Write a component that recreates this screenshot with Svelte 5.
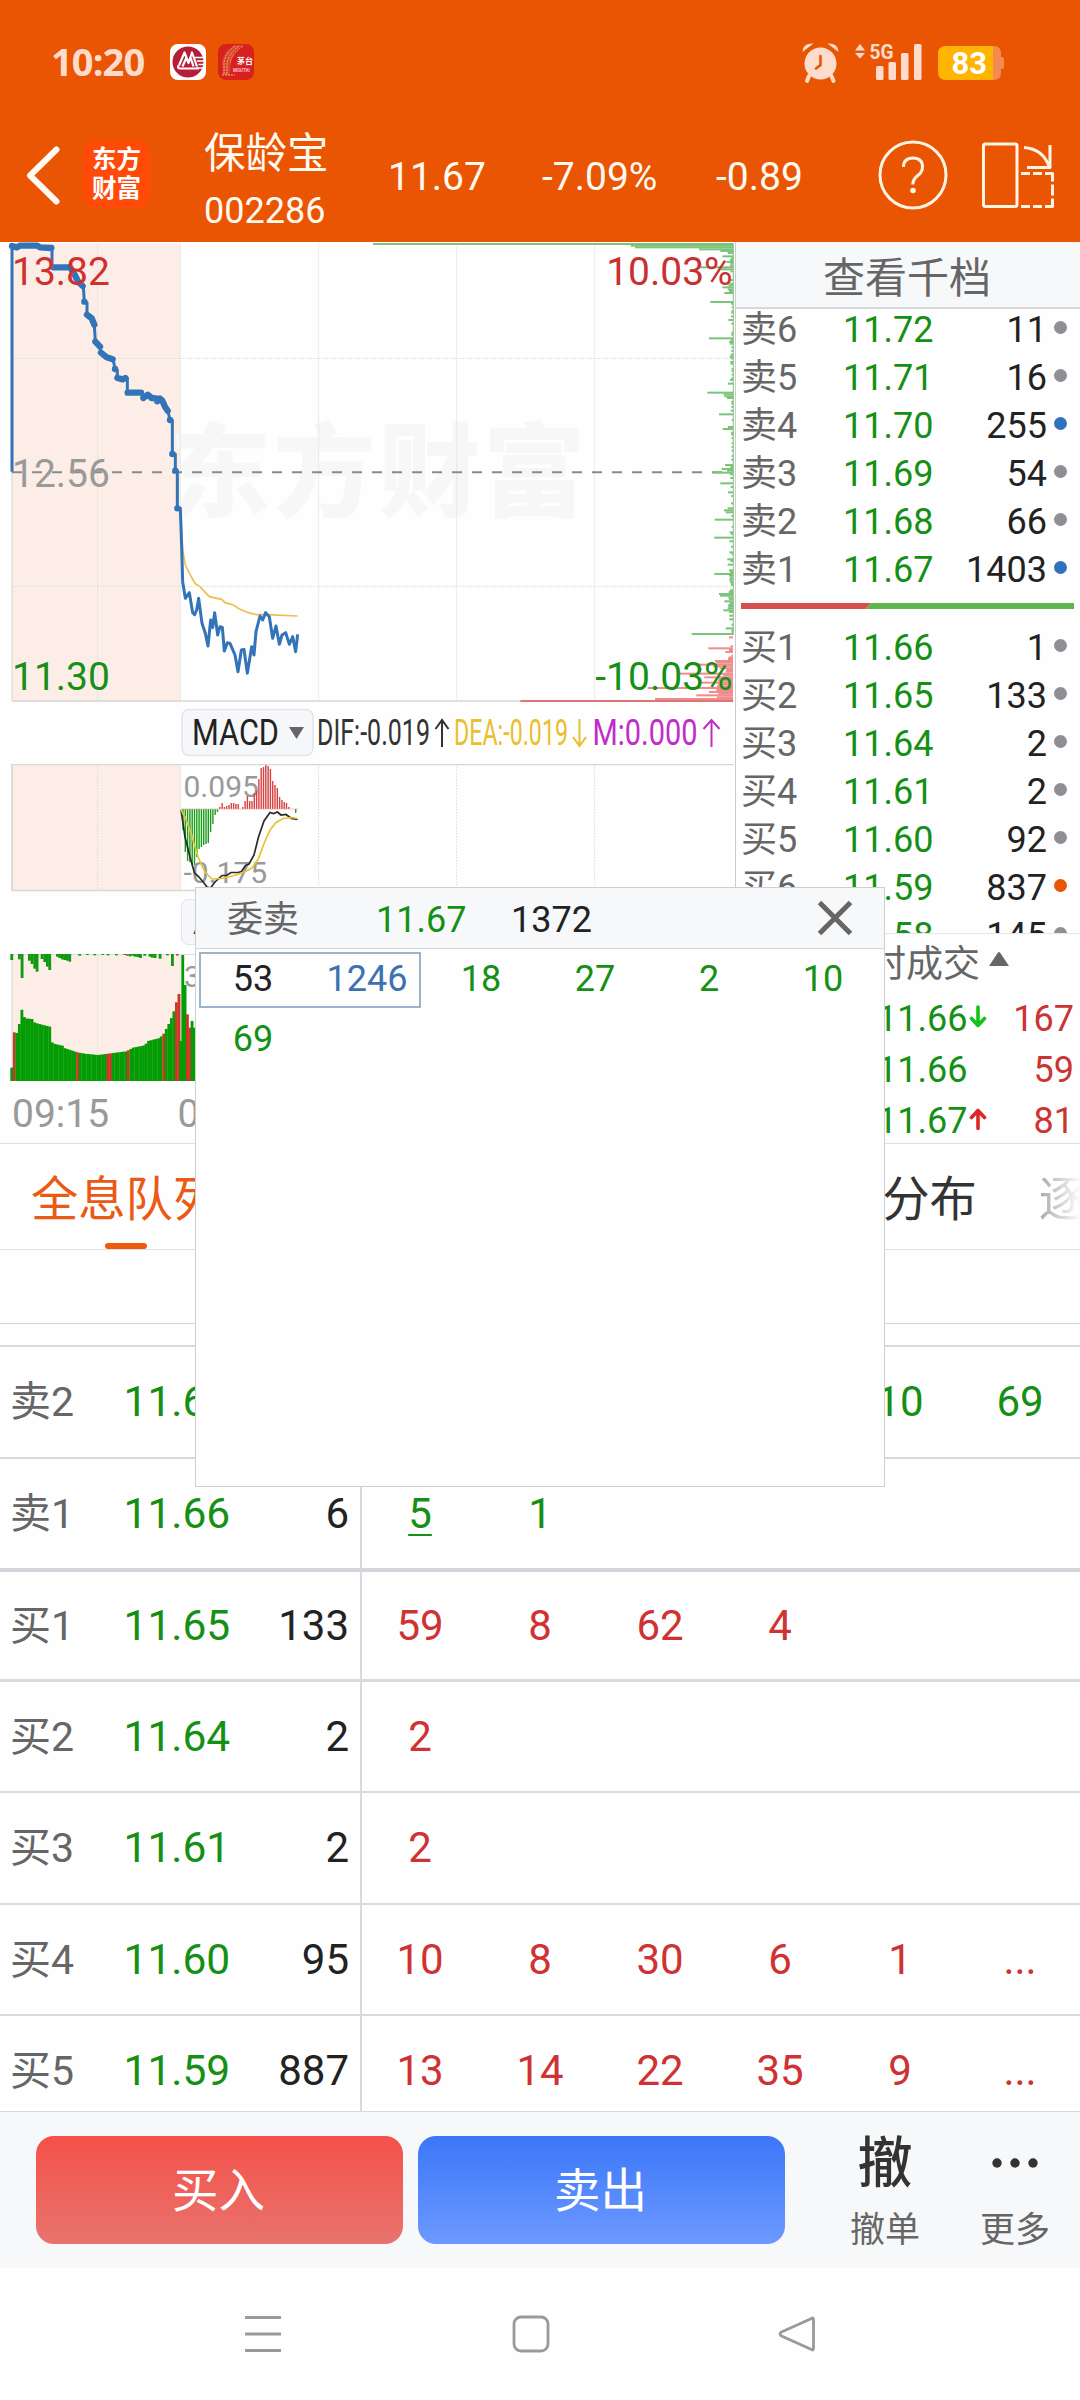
<script>
  const asks = [
    ['卖6', '11.72', '11', 'grey'],
    ['卖5', '11.71', '16', 'grey'],
    ['卖4', '11.70', '255', 'blue'],
    ['卖3', '11.69', '54', 'grey'],
    ['卖2', '11.68', '66', 'grey'],
    ['卖1', '11.67', '1403', 'blue']
  ];
  const bids = [
    ['买1', '11.66', '1', 'grey'],
    ['买2', '11.65', '133', 'grey'],
    ['买3', '11.64', '2', 'grey'],
    ['买4', '11.61', '2', 'grey'],
    ['买5', '11.60', '92', 'grey'],
    ['买6', '11.59', '837', 'orange'],
    ['买7', '11.58', '145', 'grey']
  ];
  const trades = [
    ['11.66', 'down', '167'],
    ['11.66', '', '59'],
    ['11.67', 'up', '81']
  ];
  const tabs = ['全息队列', '千档盘口', '逐笔成交', '成交分布', '逐笔'];
  const queue = [
    { label: '卖2', price: '11.67', vol: '1372', side: 'ask', cells: ['53', '1246', '18', '27', '10', '69'], h: 'h112' },
    { label: '卖1', price: '11.66', vol: '6', side: 'ask', cells: ['5', '1'], h: 'split', mark: true },
    { label: '买1', price: '11.65', vol: '133', side: 'bid', cells: ['59', '8', '62', '4'], h: 'h110' },
    { label: '买2', price: '11.64', vol: '2', side: 'bid', cells: ['2'], h: 'h111' },
    { label: '买3', price: '11.61', vol: '2', side: 'bid', cells: ['2'], h: 'h112' },
    { label: '买4', price: '11.60', vol: '95', side: 'bid', cells: ['10', '8', '30', '6', '1', '...'], h: 'h111' },
    { label: '买5', price: '11.59', vol: '887', side: 'bid', cells: ['13', '14', '22', '35', '9', '...'], h: 'h111' }
  ];
  const popupCells = ['53', '1246', '18', '27', '2', '10', '69'];

  const grid = [293, 541, 956, 1370, 1784];
  const flatRuns =
    'M36 18L50 22L60 17H112L120 22L154 24M160 82H210L222 100L235 126L248 138M253 185h.1M261 224L275 235L283 254M286 305L300 320M303 338L320 352L338 358M345 387h.1M352 414L368 418L376 414M383 458H423M430 474L443 464L455 474L472 476V484L480 476L487 482L495 500L503 512M510 540h.1M517 642h.1M526 692h.1M532 805h.1';
  const pricePath =
    'M36 695V18L50 22L60 17H112L120 22H156V82H210L222 105L235 128L250 140L253 185L261 188V224L275 235L283 256L286 305L300 320L303 338L320 352L340 360L345 387L352 390V414H382V458H425L430 474L443 464L455 474L485 476L495 500L504 514L510 540H517V642H526V692H532V805H541L545 920L548 1025L556 1075L568 1058L578 1118L584 1124L590 1110L596 1075L606 1150L616 1180L624 1218L632 1140L638 1163L644 1118L653 1185L660 1160L667 1162L673 1233L682 1208L690 1210L705 1245L714 1295L724 1230L732 1228L742 1300L755 1220L762 1245L768 1175L780 1128L788 1140L797 1118L808 1130L818 1195L828 1158L838 1213L846 1185L857 1178L868 1213L878 1190L887 1235L893 1183';
  const avgPath =
    'M541 808L548 930L556 975L570 1003L585 1030L600 1040L628 1070L665 1078L675 1088L700 1095L720 1108L745 1118L770 1124H800L893 1128';

  // price distribution: [y, length]
  const sold = [
    [12, 1080], [17, 307], [22, 294], [28, 102], [33, 38], [39, 16], [49, 32], [55, 6], [60, 9], [66, 20], [71, 8], [77, 9], [82, 100], [88, 36], [94, 8], [120, 8],
    [131, 10], [136, 14], [142, 32], [148, 16], [153, 12], [159, 26], [186, 68], [191, 6], [202, 4], [213, 4], [218, 5], [229, 6], [240, 14], [251, 5], [278, 5], [284, 5],
    [295, 72], [300, 7], [306, 12], [311, 9], [322, 5], [333, 5], [344, 7], [350, 10], [355, 7], [366, 8], [371, 7], [387, 4], [393, 4], [404, 4], [415, 5], [420, 9], [431, 15],
    [458, 77], [463, 28], [469, 26], [474, 18], [485, 5], [491, 5], [501, 5], [512, 7], [523, 42], [540, 4], [561, 15], [567, 31], [578, 6], [583, 6], [594, 4],
    [610, 4], [621, 4], [632, 4], [648, 4], [659, 5], [675, 24], [681, 8], [687, 34], [692, 18], [698, 60], [703, 10], [714, 8], [730, 38], [741, 7], [757, 15], [768, 5], [790, 6],
    [805, 16], [811, 27], [817, 22], [828, 5], [839, 55], [861, 4], [877, 10], [882, 6], [893, 56], [904, 11], [920, 6], [937, 11], [942, 4], [958, 17], [963, 8], [974, 16],
    [991, 12], [996, 9], [1002, 56], [1007, 12], [1013, 9], [1018, 11], [1024, 10], [1029, 7], [1035, 6], [1051, 9], [1056, 13], [1062, 42], [1067, 39], [1073, 14], [1078, 12],
    [1084, 26], [1089, 10], [1095, 14], [1100, 14], [1105, 16], [1111, 29], [1116, 12], [1127, 11], [1138, 11], [1154, 5], [1165, 22], [1171, 5], [1176, 4], [1182, 124]
  ];
  const bought = [
    [1192, 12], [1219, 8], [1225, 74], [1230, 12], [1236, 23], [1247, 5], [1252, 13], [1257, 15], [1263, 54], [1268, 50], [1274, 105], [1279, 60], [1285, 40], [1290, 20],
    [1295, 22], [1301, 160], [1306, 30], [1312, 86], [1317, 42], [1322, 45], [1328, 94], [1333, 46], [1339, 48], [1344, 256], [1350, 50], [1356, 72], [1361, 44], [1366, 110],
    [1372, 48], [1377, 234], [1383, 638]
  ];

  const macd = [
    -21, -43, -52, -53, -55, -56, -48, -40, -38, -36, -35, -34, -23, -15, -6, -3, 2, 6, 2, 3, 4, 6, 6, 5, 5, 0, 2, 8, 13, 8, 8, 16, 18, 30, 41, 42, 44, 43, 40, 28, 24,
    21, 12, 9, 7, 6, 2, 0, 0, -4
  ];

  // volume bars: [x, top, red?]
  const envelope = [
    [54, 431], [62, 386], [70, 415], [92, 417], [100, 428], [122, 434], [146, 440], [153, 490], [183, 497], [191, 505], [213, 512], [228, 517], [250, 521], [290, 525],
    [335, 519], [375, 514], [395, 503], [430, 496], [440, 483], [475, 474], [488, 460], [498, 440], [506, 425], [514, 403], [522, 382], [530, 342]
  ];
  const redAt = [228, 319, 327, 380, 486, 524, 531];
  function topAt(x) {
    for (let i = 1; i < envelope.length; i++) {
      const [x1, y1] = envelope[i];
      const [x0, y0] = envelope[i - 1];
      if (x <= x1) return y0 + ((y1 - y0) * (x - x0)) / (x1 - x0);
    }
    return 342;
  }
  const volume = [[31, 563, false], [38.6, 457, true], [46.2, 459, false]];
  for (let x = 53.8; x < 534; x += 7.6) volume.push([x, topAt(x), redAt.some((r) => Math.abs(r - x) < 3.8)]);
  volume.push([538, 483, false], [544, 225, false], [551, 315, false], [558, 403, true], [565, 443, true], [572, 423, false], [579, 443, false], [586, 440, false]);
  const unmatched = [
    [31, 18], [54, 16], [62, 72], [84, 20], [92, 30], [100, 44], [107, 53], [122, 15], [130, 24], [138, 38], [145, 48], [168, 8], [175, 12], [183, 16], [190, 18], [198, 20],
    [205, 23], [235, 5], [258, 3], [280, 4], [304, 3], [320, 4], [345, 4], [370, 3], [386, 7], [394, 5], [401, 8], [409, 9], [417, 12], [430, 5], [446, 8], [453, 11], [461, 12],
    [476, 14], [498, 4], [513, 36]
  ];
</script>

<div class="screen">
  <header>
    <div class="status">
      <span class="clock">10:20</span>
      <svg class="app" width="36" height="36" viewBox="0 0 36 36">
        <rect width="36" height="36" rx="8" fill="#fff" />
        <circle cx="18" cy="18" r="15.500" fill="#b81c36" />
        <path d="M25 13.500h10M27 17h8M28.500 20.500h6M26 24h8" stroke="#fff" stroke-width="1.300" />
        <path d="M9 21.500L14.500 8.500L18.500 19L22 8.500L27 22.500M12.500 22.500L16.500 13.500M23.500 22.500L20.500 13.500M8.500 21.500Q7 24.500 10.500 24.500H29" fill="none" stroke="#fff" stroke-width="2.200" stroke-linejoin="round" />
      </svg>
      <svg class="app second" width="36" height="36" viewBox="0 0 36 36">
        <rect width="36" height="36" rx="8" fill="#d8201f" />
        <path d="M17 1h8q-10 7-12 16l-1 14H5L4 17Q7 6 17 1z" fill="#dc5232" opacity=".7" />
        <path d="M17 2q-11 8-11 18v10M21 2Q10 10 9 20v11M25 2Q14 9 12 19M4 31h13" fill="none" stroke="#f5b578" stroke-width="1" stroke-dasharray="2 1" />
        <text x="19" y="20" class="tiny">茅台</text>
        <text x="15" y="27.500" class="micro">MOUTAI</text>
      </svg>
      <svg class="signals" width="204" height="44" viewBox="801 40 204 44">
        <g fill="#fddccb">
          <circle cx="820.500" cy="63.500" r="16" />
          <path d="M802.500 52q0-9 11-8.500zM838.500 52q0-9-11-8.500z" />
          <path d="M809 76l-2 5M831.500 76l2 5" stroke="#fddccb" stroke-width="4" stroke-linecap="round" />
          <path d="M855 50.500l5-6.500 5 6.500zM855 53l5 5.500 5-5.500z" />
          <rect x="876" y="66" width="7.500" height="14" rx="1.500" />
          <rect x="888.500" y="62" width="7.500" height="18" rx="1.500" />
          <rect x="901" y="53" width="7.500" height="27" rx="1.500" />
          <rect x="914" y="44" width="7.500" height="36" rx="1.500" />
          <text x="869.500" y="59" class="net" textLength="24" lengthAdjust="spacingAndGlyphs">5G</text>
        </g>
        <path d="M820.500 56v9l-4.500 3.500" fill="none" stroke="#ea5504" stroke-width="2.600" stroke-linecap="round" />
        <path d="M992 46h2q7 0 7 8v3h1q2 0 2 2v8q0 2-2 2h-1v3q0 8-7 8h-2z" fill="#f28a52" />
        <path d="M993 46h-47q-8 0-8 8v18q0 8 8 8h47z" fill="#ffb400" />
        <text x="951.500" y="74.200" class="battery">83</text>
      </svg>
    </div>
    <div class="titlebar">
      <svg class="back" width="36" height="60" viewBox="0 0 36 60"><path d="M32.500 4.500L6 30.500L32.500 56.500" /></svg>
      <div class="logo"><span>东方</span><span>财富</span></div>
      <div class="stock"><span class="name">保龄宝</span><span class="code">002286</span></div>
      <span class="quote q1">11.67</span>
      <span class="quote q2">-7.09%</span>
      <span class="quote q3">-0.89</span>
      <svg class="help" width="70" height="70" viewBox="0 0 70 70">
        <circle cx="35" cy="35" r="33" />
        <path d="M25.500 27q0-9 9.500-9t9.500 9q0 5-4.700 8.500-5 4-5 9" />
        <circle class="dot" cx="35" cy="50.500" r="2.800" />
      </svg>
      <svg class="rotate" width="74" height="68" viewBox="981 140 74 68">
        <rect x="983.500" y="143" width="33.500" height="62.500" rx="2" />
        <path d="M1024 146.500q19 1.500 25 19M1050 144v22.500h-23" />
        <path d="M1021 172.500h9m3 0h9m3 0h7.500v8m0 3v11m0 3v8h-7.500m-3 0h-9m-3 0h-9" />
      </svg>
    </div>
  </header>

  <main>
    <section class="charts">
      <svg class="price" width="734" height="462" viewBox="0 6 2202 1386">
        <rect x="36" y="10" width="505" height="1373" fill="#fceee7" />
        <text class="watermark" x="506" y="808" textLength="1250" lengthAdjust="spacing">东方财富</text>
        <g class="dots">
          {#each grid as x}<path d="M{x} 10V1383" />{/each}
          <path d="M36 355H2200M36 1039H2200" />
        </g>
        <path d="M36 10V1383" stroke="#ddd" stroke-width="4" />
        <path d="M36 1383H2200" stroke="#d4d4d4" stroke-width="5" />
        <path d="M36 697H2200" stroke="#8a8a8a" stroke-width="6" stroke-dasharray="30 30" />
        {#each sold as [y, len]}<rect x={2199 - len} y={y - 3} width={len} height="6" fill="#7cc47c" />{/each}
        {#each bought as [y, len]}<rect x={2199 - len} y={y - 3} width={len} height="6" fill={y === 1383 ? '#d77' : '#f08c8c'} />{/each}
        <path d="M2200 10V1185" stroke="#7cc47c" stroke-width="3" />
        <path d={avgPath} fill="none" stroke="#efbd52" stroke-width="5" />
        <path d={pricePath} fill="none" stroke="#3373b8" stroke-width="9" stroke-linejoin="round" />
        <path d={flatRuns} fill="none" stroke="#3373b8" stroke-width="19" stroke-linecap="round" stroke-linejoin="round" />
        <g class="scale">
          <text x="36" y="135" fill="#d03030">13.82</text>
          <text x="36" y="741" fill="#999">12.56</text>
          <text x="36" y="1350" fill="#159015">11.30</text>
          <text x="2198" y="135" fill="#c93030" text-anchor="end">10.03%</text>
          <text x="2198" y="1350" fill="#159015" text-anchor="end">-10.03%</text>
        </g>
      </svg>

      <svg class="indicator" width="734" height="60" viewBox="0 704 734 60">
        <rect x="182" y="709.500" width="131" height="46" rx="7" fill="#f6f7fa" stroke="#e3e5e9" stroke-width="1.500" />
        <text x="192" y="744.700" fill="#222" textLength="87" lengthAdjust="spacingAndGlyphs">MACD</text>
        <path d="M289 727h15l-7.500 12z" fill="#666" />
        <text x="317" y="744.700" fill="#333" textLength="113" lengthAdjust="spacingAndGlyphs">DIF:-0.019</text>
        <path d="M442 747v-27m-6.500 9l6.500-9 6.500 9" stroke="#333" />
        <text x="454" y="744.700" fill="#e9bf2f" textLength="114" lengthAdjust="spacingAndGlyphs">DEA:-0.019</text>
        <path d="M579.500 719v27m-6.500-9l6.500 9 6.500-9" stroke="#e9bf2f" />
        <text x="592.500" y="744.700" fill="#c12cc9" textLength="105" lengthAdjust="spacingAndGlyphs">M:0.000</text>
        <path d="M711.500 747v-27m-8 9l8-9 8 9" stroke="#c12cc9" />
      </svg>

      <svg class="macd" width="734" height="128" viewBox="0 0 734 128">
        <rect x="12" y="0" width="169" height="127" fill="#fceee7" />
        <g class="dots thin">{#each grid as x}<path d="M{x / 3} 0V127" />{/each}</g>
        <path d="M12 .5H734M12 0V127M12 126.500H734" stroke="#d8d8d8" stroke-width="1.500" />
        <text x="183.500" y="32.800">0.095</text>
        <text x="183.500" y="119">-0.175</text>
        {#each macd as v, i}
          <rect x={182.300 + i * 2.3} y={v > 0 ? 45 - v : 45} width="1.400" height={Math.abs(v)} fill={v > 0 ? '#d94040' : '#18a018'} />
        {/each}
        <path d="M181 45H298" class="zero" />
        <path d="M181 46L185 73L190 93L194.500 109L199 113L204 119L207 123L210.500 124L215 118L222 111.500L226.500 111.500L231 108.500L238 108.500L241.500 107.500L245.500 101.500L249 100L254 91L258.500 73L264 57L270 48.500L273.500 49.500L277.500 48L281 51L286 50.500L291.500 54.500L297.500 55.500" stroke="#2b2b2b" />
        <path d="M181 46L185 53L191 69L198 93L205 108L212 115L222 114.500L236 111L245.500 107.500L252.500 103.500L258.500 94.500L264 79.500L270 66L276 58.500L283 54.500L292.500 53.500L297.500 54.500" stroke="#e9c233" />
      </svg>

      <div class="amount-bar"><span class="pill">AMO</span></div>

      <svg class="volume" width="734" height="128" viewBox="0 222 2202 384">
        <rect x="36" y="222" width="505" height="381" fill="#fceee7" />
        <path d="M36 223H2200M36 222V603" stroke="#ddd" stroke-width="4" />
        <g class="dots">{#each grid as x}<path d="M{x} 222V603" />{/each}</g>
        {#each volume as [x, top, red]}<rect {x} y={top} width="8.500" height={603 - top} fill={red ? '#cf3526' : '#049c04'} />{/each}
        {#each unmatched as [x, len]}<rect {x} y="222" width="8.500" height={len} fill="#109a10" />{/each}
        <path d="M378 225h8M528 224h8" stroke="#cf3526" stroke-width="5" />
        <text x="552" y="320">32541</text>
      </svg>
      <div class="axis"><span>09:15</span><span>09:30</span></div>
    </section>

    <section class="book">
      <div class="book-head">查看千档</div>
      <div class="levels">
        {#each asks as [label, price, vol, tone]}
          <div class="level"><span class="lab">{label}</span><span class="green">{price}</span><span class="vol">{vol}</span><i class={tone}></i></div>
        {/each}
        <svg class="ratio" width="333" height="6" viewBox="0 0 333 6">
          <path d="M0 0H130L124.500 6H0z" fill="#d94e4e" /><path d="M130 0H333V6H124.500z" fill="#62b54c" />
        </svg>
        {#each bids as [label, price, vol, tone]}
          <div class="level"><span class="lab">{label}</span><span class="green">{price}</span><span class="vol">{vol}</span><i class={tone}></i></div>
        {/each}
      </div>
      <div class="deals-head"><span>分时成交</span><svg width="22" height="16" viewBox="0 0 22 16"><path d="M1 15L10 1.500q1-1 2 0L21 15z" fill="#666" /></svg></div>
      {#each trades as [price, dir, vol]}
        <div class="deal">
          <span class="green">{price}</span>
          <svg width="18" height="24" viewBox="0 0 18 24">
            {#if dir === 'down'}<path d="M9 2v18M2.500 13.500l6.500 7 6.500-7" stroke="#12c41a" />{/if}
            {#if dir === 'up'}<path d="M9 21.500V3.500M2.500 10.500l6.500-7 6.500 7" stroke="#dd2727" />{/if}
          </svg>
          <span class="red">{vol}</span>
        </div>
      {/each}
    </section>
  </main>

  <nav class="tabs">
    {#each tabs as tab, i}<span class:active={i === 0}>{tab}</span>{/each}
  </nav>
  <div class="strip"></div>

  <section class="queue">
    {#each queue as row}
      <div class="row {row.h}">
        <div class="side"><span class="lab">{row.label}</span><span class="green">{row.price}</span><span class="vol">{row.vol}</span></div>
        <div class="cells {row.side}">
          {#each row.cells as cell, i}<span><b class:mark={row.mark && i === 0}>{cell}</b></span>{/each}
        </div>
      </div>
    {/each}
  </section>

  <footer>
    <button class="buy">买入</button>
    <button class="sell">卖出</button>
    <div class="action"><span class="glyph">撤</span><span>撤单</span></div>
    <div class="action more">
      <svg width="48" height="54" viewBox="0 0 48 54"><circle cx="6" cy="27" r="4.700" /><circle cx="24" cy="27" r="4.700" /><circle cx="42" cy="27" r="4.700" /></svg>
      <span>更多</span>
    </div>
  </footer>

  <div class="system">
    <svg width="40" height="40" viewBox="0 0 40 40"><path d="M2 3.500H38M2 20H38M2 36.500H38" /></svg>
    <svg width="40" height="40" viewBox="0 0 40 40"><rect x="3" y="3" width="34" height="34" rx="7" /></svg>
    <svg width="40" height="40" viewBox="0 0 40 40"><path d="M34.500 4.500Q36.500 3 36.500 6V34Q36.500 37 34.500 35.500L4.500 22Q1.500 20 4.500 18z" /></svg>
  </div>

  <div class="popup">
    <div class="popup-head">
      <span class="lab">委卖</span><span class="green">11.67</span><span class="total">1372</span>
      <svg width="36" height="36" viewBox="0 0 36 36"><path d="M2.500 2.500L33.500 33.500M33.500 2.500L2.500 33.500" /></svg>
    </div>
    <div class="popup-grid">
      {#each popupCells as cell, i}<span class:own={i === 0} class:big={i === 1}>{cell}</span>{/each}
      <div class="frame"></div>
    </div>
  </div>
</div>

<style>
  :global(body) { margin: 0; background: #fefefe; }
  .screen {
    position: relative;
    width: 1080px;
    height: 2400px;
    overflow: hidden;
    background: #fefefe;
    font-family: Roboto, 'Noto Sans CJK SC', sans-serif;
    color: #222;
    display: flex;
    flex-direction: column;
  }
  svg { display: block; flex: none; }
  span { white-space: nowrap; }
  .green { color: #159015; }
  .lab { color: #666; }

  header { height: 242px; background: #ea5504; flex: none; }
  .status { display: flex; align-items: center; height: 124px; padding: 0 75px 0 51px; box-sizing: border-box; }
  .clock { font: 700 38px/44px 'Open Sans', sans-serif; color: #fddccb; width: 119px; letter-spacing: -.9px; margin-top: -2px; }
  .app.second { margin-left: 12px; }
  .signals { margin-left: auto; }
  .tiny { font: 700 8px 'Noto Sans CJK SC', sans-serif; fill: #fff; }
  .micro { font: 700 4.500px Roboto, sans-serif; fill: #fbd; }
  .net { font: 700 21px Roboto, sans-serif; }
  .battery { font: 700 31px Roboto, sans-serif; fill: #fff; }

  .titlebar { display: flex; align-items: center; height: 101px; color: #fffaf0; }
  .back { margin-left: 24px; fill: none; stroke: #fffaf3; stroke-width: 6; stroke-linecap: round; stroke-linejoin: round; }
  .logo {
    margin-left: 23px; width: 67px; height: 67px; border-radius: 13px; background: #ff4a08; color: #fff;
    display: flex; flex-direction: column; align-items: center; justify-content: center;
    font-size: 24.500px; font-weight: 700; line-height: 29px; padding-bottom: 1px; box-sizing: border-box;
  }
  .stock { display: flex; flex-direction: column; width: 184px; margin-left: 54px; padding-top: 16px; }
  .name { font-size: 41.500px; line-height: 58px; }
  .code { font-size: 36px; line-height: 57px; }
  .quote { font-size: 39px; line-height: 60px; padding-top: 4px; }
  .q1 { width: 154px; }
  .q2 { width: 174px; }
  .q3 { width: 162px; }
  .help, .rotate { fill: none; stroke: #fff3e2; stroke-width: 3; }
  .help .dot { fill: #fff3e2; stroke: none; }
  .rotate { margin-left: 33px; stroke-linejoin: round; }

  main { display: flex; height: 902px; flex: none; border-bottom: 1px solid #dfe0e2; box-sizing: border-box; }
  .charts { width: 735px; flex: none; }
  .dots path { stroke: #dadada; stroke-width: 3; stroke-dasharray: 4 4; }
  .dots.thin path { stroke-width: 1; stroke-dasharray: 1.500 1.500; }
  .watermark { font: 900 306px 'Noto Sans CJK SC', sans-serif; fill: #f7f7f7; }
  .scale text { font: 117px Roboto, sans-serif; }
  .indicator text { font: 36px Roboto, sans-serif; }
  .indicator path[stroke] { fill: none; stroke-width: 2; }
  .macd path[stroke] { fill: none; stroke-width: 1.700; }
  .macd .zero { stroke: #eda0a0; stroke-width: .6; }
  .macd text { font: 30px Roboto, sans-serif; fill: #999; }
  .volume text { font: 90px Roboto, sans-serif; fill: #999; }
  .amount-bar { height: 62px; box-sizing: border-box; padding: 7px 0 0 181px; display: flex; }
  .pill { width: 131px; height: 46px; box-sizing: border-box; border: 1px solid #e3e5e9; border-radius: 7px; background: #f6f7fa; font-size: 36px; line-height: 45px; padding-left: 11px; }
  .axis { display: flex; height: 60px; line-height: 65px; font-size: 39px; color: #999; padding-left: 12px; }
  .axis span { width: 165.500px; }

  .book { flex: 1; border-left: 1px solid #ccc; overflow: hidden; }
  .book-head { height: 65px; line-height: 74px; border-bottom: 2px solid #d5d8dc; background: #f6f8fa; color: #666; font-size: 42px; text-align: center; padding-right: 2px; }
  .levels { height: 627px; margin-top: -3px; overflow: hidden; border-bottom: 1px solid #e3e5e8; }
  .level { display: flex; align-items: center; height: 48px; line-height: 50px; font-size: 36px; padding-left: 5px; }
  .level .lab { width: 102px; }
  .level .vol { width: 104px; text-align: right; }
  .level .green { width: 100px; }
  .level i { width: 13px; height: 13px; border-radius: 50%; margin: 0 0 6px 7px; }
  .grey { background: #8e8e93; }
  .blue { background: #2f73bd; }
  .orange { background: #e85504; }
  .ratio { margin: 9px 0 15px 5px; }
  .deals-head { display: flex; align-items: center; height: 58px; padding-left: 96px; font-size: 37px; line-height: 62px; color: #666; gap: 8px; }
  .deals-head span { padding-top: 3px; }
  .deals-head svg { margin-bottom: 9px; }
  .deal { display: flex; align-items: center; height: 51px; line-height: 51px; font-size: 36px; padding: 0 6px 0 141px; }
  .deal span { padding-top: 3px; }
  .deal svg { margin-left: 2px; margin-bottom: 2px; fill: none; stroke-width: 3.600; stroke-linecap: round; stroke-linejoin: round; }
  .deal .red { color: #cc3333; margin-left: auto; }

  .tabs {
    height: 106px; flex: none; display: flex; gap: 63px; padding-left: 31px; box-sizing: border-box; overflow: hidden;
    border-bottom: 1px solid #e0e1e3; font-size: 47.300px; line-height: 113px; color: #333;
  }
  .tabs span { flex: none; position: relative; }
  .tabs .active { color: #ea5a14; }
  .tabs .active::after { content: ''; position: absolute; left: 74px; top: 99px; width: 42px; height: 6px; border-radius: 3px; background: #f05a0c; }
  .tabs span:last-child { background: linear-gradient(90deg, #a8a8a8, #fefefe 42px); background-clip: text; color: transparent; margin-left: -1px; }
  .strip { height: 73px; border-bottom: 1px solid #d4d7da; flex: none; margin-bottom: 21px; }

  .queue { border-top: 2px solid #d8dbdf; height: 766px; flex: none; overflow: hidden; font-size: 42px; line-height: 60px; box-sizing: border-box; }
  .row { display: flex; box-sizing: border-box; border-bottom: 2px solid #d6d9dd; }
  .h110 { height: 110px; border-bottom-width: 3px; }
  .h111 { height: 111px; }
  .h112 { height: 112px; }
  .split { height: 113px; border-bottom: 4px solid #d3d6db; }
  .side { width: 350px; display: flex; align-items: center; padding-right: 11px; border-right: 2px solid #d6d9dd; box-sizing: border-box; width: 362px; }
  .side .lab { width: 113.500px; padding-left: 10px; font-size: 41px; }
  .side .green { font-size: 42.500px; }
  .side .vol { margin-left: auto; }
  .cells { flex: 1; display: grid; grid-template-columns: repeat(6, 120px); align-items: center; text-align: center; margin-left: -2px; }
  .cells b { font-weight: 400; }
  .ask { color: #159015; }
  .bid { color: #cf3232; }
  .mark { text-decoration: underline; text-decoration-thickness: 2px; text-underline-offset: 6px; }

  footer { height: 157px; flex: none; box-sizing: border-box; border-top: 1px solid #d5d8dc; background: #f6f8fa; display: flex; padding: 24px 0 0 36px; }
  button { width: 367px; height: 108px; border: 0; border-radius: 18px; margin-right: 15px; padding: 0 2px 0 0; font: 46.500px/110px Roboto, 'Noto Sans CJK SC', sans-serif; color: #fff; }
  .buy { background: linear-gradient(#f4514a, #e9736d); }
  .sell { background: linear-gradient(#3c77f8, #6c99ff); }
  .action { width: 110px; margin-left: 30px; display: flex; flex-direction: column; align-items: center; font-size: 35px; line-height: 81px; color: #666; }
  .glyph { font-size: 55px; line-height: 54px; color: #333; font-weight: 500; }
  .more { margin-left: 20px; }
  .more svg { fill: #333; }

  .system { flex: 1; display: flex; padding: 46px 0 0 243px; gap: 228px; }
  .system svg { fill: none; stroke: #9a9a9a; stroke-width: 2.800; }
  .system svg:last-child { margin-left: -2px; }

  .popup { position: absolute; left: 195px; top: 887px; width: 690px; height: 600px; box-sizing: border-box; border: 1px solid #cdd0d3; background: #fefefe; font-size: 36px; }
  .popup-head { display: flex; align-items: center; height: 60px; line-height: 60px; border-bottom: 1px solid #d3d6da; background: #f6f8fa; padding-left: 31px; }
  .popup-head span { padding-top: 3px; }
  .popup-head .lab { width: 149px; }
  .popup-head .green { width: 135px; }
  .popup-head .total { width: 306px; }
  .popup-head svg { stroke: #666; stroke-width: 5; }
  .popup-grid { position: relative; display: grid; grid-template-columns: repeat(6, 114px); grid-auto-rows: 60px; line-height: 60px; text-align: center; color: #159015; }
  .popup-grid .own { color: #222; }
  .popup-grid .big { color: #3c72b0; }
  .frame { position: absolute; left: 3px; top: 3px; width: 222px; height: 56px; box-sizing: border-box; border: 2px solid #9ab4cd; }
</style>
